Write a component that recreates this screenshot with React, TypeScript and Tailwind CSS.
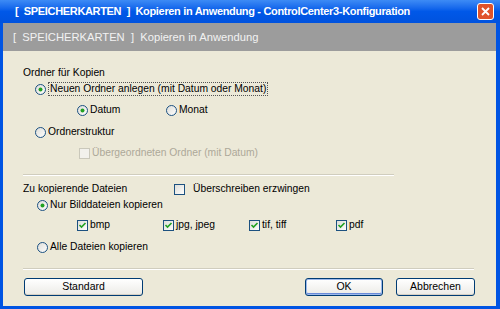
import React from "react";

const font = { fontFamily: '"Liberation Sans", Arial, sans-serif' };

function Radio({ checked = false }: { checked?: boolean }) {
  return (
    <svg width="11" height="11" viewBox="0 0 11 11" className="shrink-0">
      <defs>
        <linearGradient id="rg" x1="0" y1="0" x2="1" y2="1">
          <stop offset="0" stopColor="#DCDCD7" />
          <stop offset="1" stopColor="#FFFFFF" />
        </linearGradient>
      </defs>
      <circle cx="5.5" cy="5.5" r="5" fill="url(#rg)" stroke="#1C5180" strokeWidth="1" />
      {checked && <circle cx="5.5" cy="5.5" r="2" fill="#21A121" />}
    </svg>
  );
}

function Check({ checked = false, disabled = false }: { checked?: boolean; disabled?: boolean }) {
  return (
    <svg width="11" height="11" viewBox="0 0 11 11" className="shrink-0">
      <defs>
        <linearGradient id="cg" x1="0" y1="0" x2="1" y2="1">
          <stop offset="0" stopColor="#DCDCD7" />
          <stop offset="1" stopColor="#FFFFFF" />
        </linearGradient>
      </defs>
      <rect
        x="0.5"
        y="0.5"
        width="10"
        height="10"
        fill={disabled ? "#F2F1EC" : "url(#cg)"}
        stroke={disabled ? "#CAC8BB" : "#1C5180"}
      />
      {checked && (
        <path d="M2.5 5 L4.5 7 L8.5 3" fill="none" stroke="#21A121" strokeWidth="1.6" />
      )}
    </svg>
  );
}

function Btn({ children, w, def = false }: { children: React.ReactNode; w: string; def?: boolean }) {
  return (
    <div
      className={`${w} h-[18px] rounded-[3px] border border-[#003C74] bg-gradient-to-b from-[#FFFFFF] to-[#ECEBE6] flex items-center justify-center text-[10.5px] text-black ${
        def ? "shadow-[inset_0_0_0_1px_#9DB9EB,inset_0_-1px_0_1px_#6A8BD9]" : "shadow-[inset_0_-1px_0_#D6D0C5]"
      }`}
    >
      {children}
    </div>
  );
}

export default function App() {
  return (
    <div className="w-[500px] h-[309px] bg-[#0054E3] flex flex-col overflow-hidden" style={font}>
      {/* title bar */}
      <div className="h-[23px] shrink-0 bg-gradient-to-b from-[#3D8BF5] via-[#0058E8] to-[#0052DE] flex items-center pl-[15px] pr-[6px]">
        <span className="text-white font-bold text-[11px] tracking-[-0.33px] flex-1 whitespace-nowrap">
          [&nbsp; SPEICHERKARTEN &nbsp;]&nbsp; Kopieren in Anwendung - ControlCenter3-Konfiguration
        </span>
        <div className="w-[17px] h-[17px] rounded-[3px] border border-white bg-[#E0532B] flex items-center justify-center">
          <svg width="9" height="9" viewBox="0 0 9 9">
            <path d="M1 1 L8 8 M8 1 L1 8" stroke="white" strokeWidth="1.8" />
          </svg>
        </div>
      </div>

      <div className="flex-1 flex flex-col ml-[3px] mr-[4px] mb-[3px]">
        {/* gray header */}
        <div className="h-[28px] shrink-0 bg-[#9C9C9C] flex items-center pl-[10px]">
          <span className="text-[#F2F2F2] text-[11.2px] whitespace-nowrap">
            [&nbsp; SPEICHERKARTEN &nbsp;]&nbsp; Kopieren in Anwendung
          </span>
        </div>

        {/* body */}
        <div className="flex-1 bg-[#ECE9D8] pl-[20px] pt-[14px] text-[10.3px] text-black flex flex-col">
          <div className="h-[16px] flex items-center">Ordner für Kopien</div>

          <div className="h-[16px] flex items-center pl-[12px] gap-[2px]">
            <Radio checked />
            <span className="border border-dotted border-[#555] px-[1px] leading-[12px]">
              Neuen Ordner anlegen (mit Datum oder Monat)
            </span>
          </div>

          <div className="h-[16px] mt-[5px] flex items-center pl-[54px]">
            <div className="w-[89px] flex items-center gap-[2px]">
              <Radio checked />
              <span>Datum</span>
            </div>
            <div className="flex items-center gap-[2px]">
              <Radio />
              <span>Monat</span>
            </div>
          </div>

          <div className="h-[16px] mt-[6px] flex items-center pl-[12px] gap-[2px]">
            <Radio />
            <span>Ordnerstruktur</span>
          </div>

          <div className="h-[16px] mt-[5px] flex items-center pl-[56px] gap-[2px]">
            <Check disabled />
            <span className="text-[#ACA899]">Übergeordneten Ordner (mit Datum)</span>
          </div>

          <div className="mt-[13px] w-[371px] h-[2px] border-t border-[#D0CDBE] border-b border-b-white" />

          <div className="h-[16px] mt-[5px] flex items-center">
            <span className="w-[151px]">Zu kopierende Dateien</span>
            <Check />
            <span className="ml-[8px]">Überschreiben erzwingen</span>
          </div>

          <div className="h-[16px] flex items-center pl-[14px] gap-[2px]">
            <Radio checked />
            <span>Nur Bilddateien kopieren</span>
          </div>

          <div className="h-[16px] mt-[4px] flex items-center pl-[54px]">
            <div className="w-[86px] flex items-center gap-[2px]">
              <Check checked />
              <span>bmp</span>
            </div>
            <div className="w-[86px] flex items-center gap-[2px]">
              <Check checked />
              <span>jpg, jpeg</span>
            </div>
            <div className="w-[87px] flex items-center gap-[2px]">
              <Check checked />
              <span>tif, tiff</span>
            </div>
            <div className="flex items-center gap-[2px]">
              <Check checked />
              <span>pdf</span>
            </div>
          </div>

          <div className="h-[16px] mt-[6px] flex items-center pl-[14px] gap-[2px]">
            <Radio />
            <span>Alle Dateien kopieren</span>
          </div>

          <div className="mt-[13px] w-[451px] h-[2px] border-t border-[#D0CDBE] border-b border-b-white" />

          <div className="mt-[8px] flex items-center pl-[1px]">
            <Btn w="w-[119px]">Standard</Btn>
            <div className="flex-1" />
            <Btn w="w-[78px]" def>
              OK
            </Btn>
            <div className="w-[13px]" />
            <Btn w="w-[79px]">Abbrechen</Btn>
            <div className="w-[21px]" />
          </div>
        </div>
      </div>
    </div>
  );
}
